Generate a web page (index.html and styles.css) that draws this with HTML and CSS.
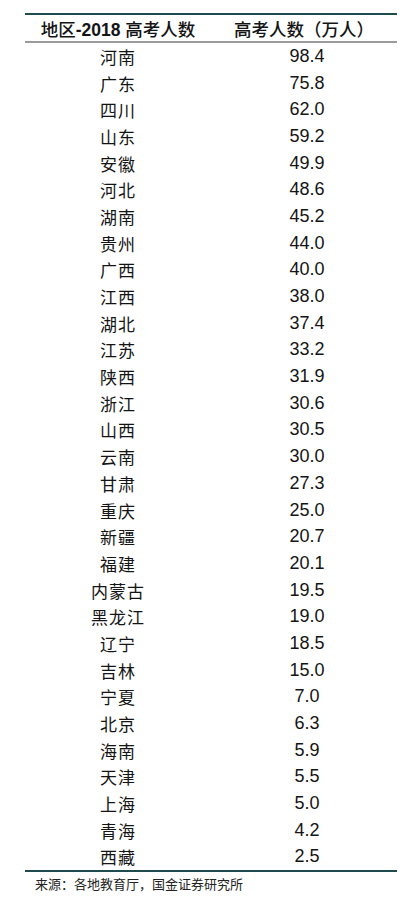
FILE: index.html
```html
<!DOCTYPE html>
<html lang="zh">
<head>
<meta charset="utf-8">
<title>地区-2018 高考人数</title>
<link rel="stylesheet" href="styles.css">
</head>
<body>
<div class="wrap">
  <div class="table">
    <div class="head">
      <div class="cell">地区<b>-2018</b> 高考人数</div>
      <div class="cell">高考人数（万人）</div>
    </div>
    <div class="body">
      <div class="cell">河南</div><div class="cell num">98.4</div>
      <div class="cell">广东</div><div class="cell num">75.8</div>
      <div class="cell">四川</div><div class="cell num">62.0</div>
      <div class="cell">山东</div><div class="cell num">59.2</div>
      <div class="cell">安徽</div><div class="cell num">49.9</div>
      <div class="cell">河北</div><div class="cell num">48.6</div>
      <div class="cell">湖南</div><div class="cell num">45.2</div>
      <div class="cell">贵州</div><div class="cell num">44.0</div>
      <div class="cell">广西</div><div class="cell num">40.0</div>
      <div class="cell">江西</div><div class="cell num">38.0</div>
      <div class="cell">湖北</div><div class="cell num">37.4</div>
      <div class="cell">江苏</div><div class="cell num">33.2</div>
      <div class="cell">陕西</div><div class="cell num">31.9</div>
      <div class="cell">浙江</div><div class="cell num">30.6</div>
      <div class="cell">山西</div><div class="cell num">30.5</div>
      <div class="cell">云南</div><div class="cell num">30.0</div>
      <div class="cell">甘肃</div><div class="cell num">27.3</div>
      <div class="cell">重庆</div><div class="cell num">25.0</div>
      <div class="cell">新疆</div><div class="cell num">20.7</div>
      <div class="cell">福建</div><div class="cell num">20.1</div>
      <div class="cell">内蒙古</div><div class="cell num">19.5</div>
      <div class="cell">黑龙江</div><div class="cell num">19.0</div>
      <div class="cell">辽宁</div><div class="cell num">18.5</div>
      <div class="cell">吉林</div><div class="cell num">15.0</div>
      <div class="cell">宁夏</div><div class="cell num">7.0</div>
      <div class="cell">北京</div><div class="cell num">6.3</div>
      <div class="cell">海南</div><div class="cell num">5.9</div>
      <div class="cell">天津</div><div class="cell num">5.5</div>
      <div class="cell">上海</div><div class="cell num">5.0</div>
      <div class="cell">青海</div><div class="cell num">4.2</div>
      <div class="cell">西藏</div><div class="cell num">2.5</div>
    </div>
  </div>
  <div class="source">来源：各地教育厅，国金证券研究所</div>
</div>
</body>
</html>
```

FILE: styles.css
```css
html, body {
  margin: 0;
  padding: 0;
  background: #ffffff;
}
body {
  font-family: "Liberation Sans", "Noto Sans CJK SC", sans-serif;
  color: #141414;
}
.wrap {
  padding: 13px 17px 0 25px;
}
.table {
  border-top: 2px solid #1e4b4d;
  border-bottom: 2px solid #1e4b4d;
}
.head {
  display: grid;
  grid-template-columns: 1fr 1fr;
  height: 26px;
  align-items: center;
  border-bottom: 2px solid #9b9b9b;
  font-size: 17.5px;
  font-weight: 500;
}
.head b {
  font-weight: bold;
}
.cell {
  text-align: center;
  white-space: nowrap;
}
.body {
  display: grid;
  grid-template-columns: 1fr 1fr;
  grid-auto-rows: 26.7px;
  align-items: center;
  font-size: 17px;
}
.body .cell {
  letter-spacing: 1px;
}
.body .num {
  font-size: 18px;
  letter-spacing: 0;
  padding-left: 6px;
}
.source {
  margin-top: 4px;
  padding-left: 10px;
  font-size: 13px;
  line-height: 18px;
  color: #222;
}
```
